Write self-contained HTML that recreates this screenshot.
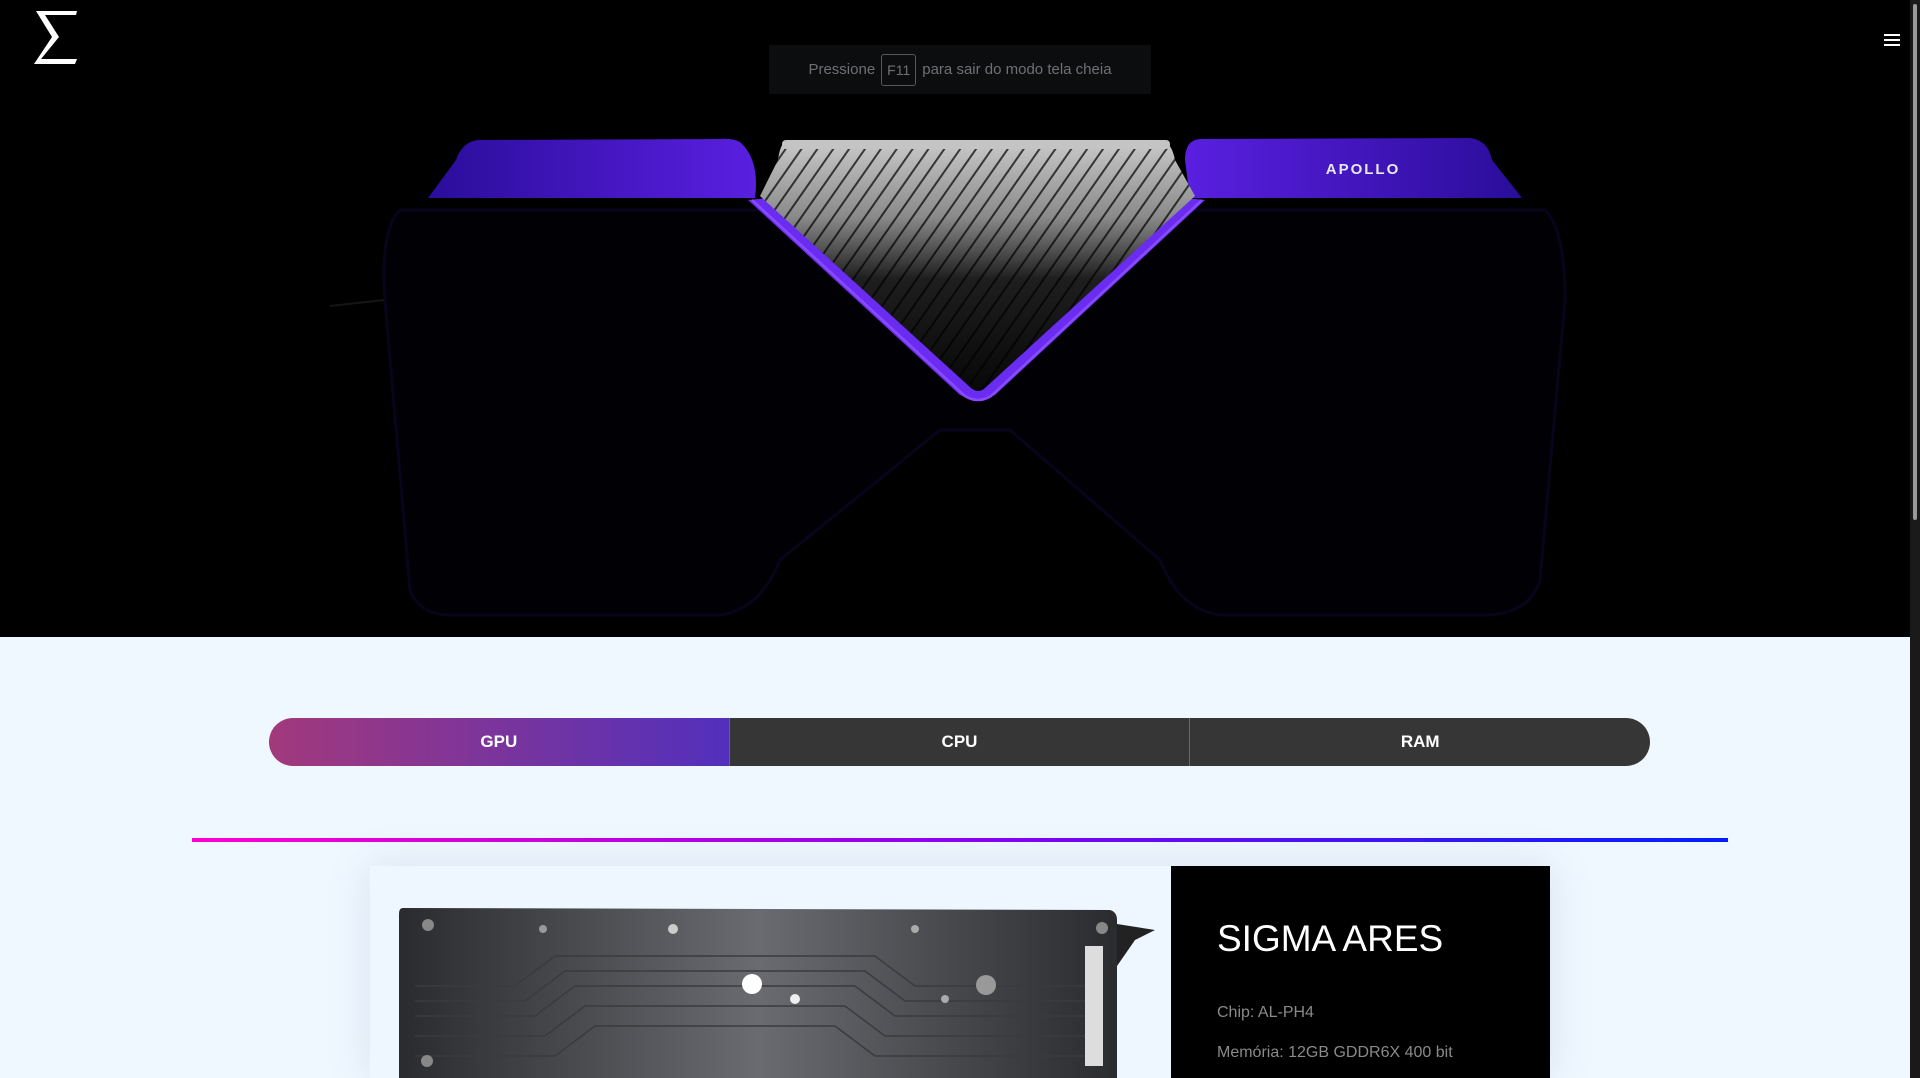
<!DOCTYPE html>
<html><head><meta charset="utf-8">
<style>
html,body{margin:0;padding:0;width:1920px;height:1078px;overflow:hidden;background:#eff7ff;font-family:"Liberation Sans",sans-serif}
.hero{position:absolute;left:0;top:0;width:1920px;height:637px;background:#000;overflow:hidden}
.tip{position:absolute;left:769px;top:45px;width:382px;height:49px;background:#0c0d0f;color:#6e7074;font-size:15px;display:flex;align-items:center;justify-content:center;gap:6px}
.tip .k{border:1px solid #55585c;border-radius:3px;padding:7px 5px;font-size:14px}
.sb{position:absolute;right:0;top:0;width:10px;height:1078px;background:#1a1a1a}
.sb div{position:absolute;left:3px;top:4px;width:4px;height:516px;background:#9a9a9a;border-radius:2px}
.ham{position:absolute;left:1884px;top:34px;width:16px}
.ham i{display:block;height:2px;background:#fff;margin-bottom:3px}
.tabs{position:absolute;left:269px;top:718px;width:1381px;height:48px;border-radius:24px;overflow:hidden;display:flex}
.tabs div{flex:1;display:flex;align-items:center;justify-content:center;color:#fff;font-weight:bold;font-size:17px;background:#363636}
.tabs div.a{background:linear-gradient(90deg,#a2397c,#5230bc)}
.tabs div+div{border-left:1px solid #666}
.line{position:absolute;left:192px;top:838px;width:1536px;height:4px;background:linear-gradient(90deg,#ff00d0,#8a00f0 50%,#0020ff)}
.card{position:absolute;left:370px;top:866px;width:1180px;height:212px;background:#eef6ff;box-shadow:0 0 40px rgba(120,140,170,.18)}
.panel{position:absolute;left:1171px;top:866px;width:379px;height:212px;background:#000;color:#fff}
.panel h1{position:absolute;left:46px;top:52px;margin:0;font-size:37px;font-weight:normal;letter-spacing:0}
.panel p{position:absolute;left:46px;margin:0;font-size:16px;color:#8a8a8a}
</style></head><body>
<div class="hero">
<svg width="1920" height="637" viewBox="0 0 1920 637" style="position:absolute;left:0;top:0">
<defs>
<linearGradient id="pl" x1="0" x2="1" y1="0" y2="0"><stop offset="0" stop-color="#2a0d9a"/><stop offset="1" stop-color="#5a1fe0"/></linearGradient>
<linearGradient id="pr" x1="0" x2="1" y1="0" y2="0"><stop offset="0" stop-color="#5a1fe0"/><stop offset="1" stop-color="#2a0d9a"/></linearGradient>
<linearGradient id="hs" x1="0" x2="0" y1="0" y2="1"><stop offset="0" stop-color="#c8c8c8"/><stop offset=".3" stop-color="#8a8a8a"/><stop offset=".55" stop-color="#1e1e1e"/><stop offset="1" stop-color="#080808"/></linearGradient>
<pattern id="fins" width="13" height="13" patternUnits="userSpaceOnUse" patternTransform="rotate(35)"><rect x="0" width="2" height="13" fill="#000" opacity=".7"/></pattern>
</defs>
<path d="M400 210 Q380 230 385 300 L410 590 Q420 615 450 615 L720 615 Q760 610 780 560 L940 430 L1010 430 L1160 560 Q1180 610 1220 615 L1490 615 Q1530 612 1540 580 L1565 300 Q1565 230 1545 210 Z" fill="#010004" stroke="#08041c" stroke-width="3"/>
<path d="M384 300 L330 306" stroke="#151515" stroke-width="2"/>
<path d="M478 140 Q462 142 456 160 L428 198 L755 198 Q760 160 740 142 Q732 138 720 139 Z" fill="url(#pl)"/>
<path d="M1200 139 Q1185 140 1185 160 L1190 198 L1522 198 L1492 160 Q1488 140 1470 138 Z" fill="url(#pr)"/>
<path d="M748 200 L790 196 L978 384 L1166 196 L1205 200 L995 395 Q978 404 960 395 Z" fill="#6a2cf0"/>
<path d="M752 200 L965 396 Q978 404 991 396 L1202 200" fill="none" stroke="#8a4aff" stroke-width="2.5"/>
<path d="M785 142 L1165 142 Q1172 145 1175 160 L1195 196 L985 388 Q978 394 971 388 L760 196 L778 160 Q780 145 785 142 Z" fill="url(#hs)"/>
<path d="M785 142 L1165 142 Q1172 145 1175 160 L1195 196 L985 388 Q978 394 971 388 L760 196 L778 160 Q780 145 785 142 Z" fill="url(#fins)"/>
<rect x="782" y="140" width="388" height="9" rx="4" fill="#c4c4c4"/>
<text x="1363" y="174" fill="#e8e8f0" font-family="Liberation Sans" font-weight="bold" font-size="15" text-anchor="middle" letter-spacing="2">APOLLO</text>
</svg>
<svg width="46" height="56" viewBox="0 0 46 56" style="position:absolute;left:33px;top:9px">
<path d="M3 2 L44 2 L43 6 L12 6 L26 28 L8 50 L44 50 L42 55 L1 55 L19 28 Z" fill="#fff"/>
</svg>
<div class="tip">Pressione <span class="k">F11</span> para sair do modo tela cheia</div>
</div>
<div class="ham"><i></i><i></i><i></i></div>
<div class="sb"><div></div></div>
<div class="tabs"><div class="a">GPU</div><div>CPU</div><div>RAM</div></div>
<div class="line"></div>
<div class="card"></div>
<svg width="780" height="172" viewBox="0 0 780 172" style="position:absolute;left:395px;top:906px">
<defs><linearGradient id="g" x1="0" x2="1"><stop offset="0" stop-color="#2a2b2e"/><stop offset=".5" stop-color="#6a6b70"/><stop offset="1" stop-color="#2a2b2e"/></linearGradient></defs>
<path d="M8 2 L715 4 Q722 6 722 14 L722 172 L4 172 L4 8 Q4 2 8 2 Z" fill="url(#g)"/>
<path d="M722 18 L760 24 L740 34 L722 60 Z" fill="#222"/>
<g fill="none" stroke="#3a3b3e" stroke-width="1.5">
<path d="M20 80 L120 80 L160 50 L480 50 L520 80 L700 80"/>
<path d="M20 95 L130 95 L170 65 L470 65 L510 95 L700 95"/>
<path d="M20 110 L140 110 L180 80 L460 80 L500 110 L700 110"/>
<path d="M20 130 L150 130 L190 100 L450 100 L490 130 L700 130"/>
<path d="M20 150 L160 150 L200 120 L440 120 L480 150 L700 150"/>
</g>
<rect x="690" y="40" width="18" height="120" fill="#ddd"/>
<g fill="#ccc"><circle cx="33" cy="19" r="6" fill="#888"/><circle cx="148" cy="23" r="4" fill="#999"/><circle cx="278" cy="23" r="5"/><circle cx="520" cy="23" r="4" fill="#aaa"/><circle cx="357" cy="78" r="10" fill="#fff"/><circle cx="400" cy="93" r="5" fill="#eee"/><circle cx="591" cy="79" r="10" fill="#999"/><circle cx="550" cy="93" r="4" fill="#aaa"/><circle cx="32" cy="155" r="6" fill="#888"/><circle cx="707" cy="22" r="6" fill="#888"/></g>
</svg>
<div class="panel">
<h1>SIGMA ARES</h1>
<p style="top:138px">Chip: AL-PH4</p>
<p style="top:178px">Memória: 12GB GDDR6X 400 bit</p>
</div>
</body></html>
